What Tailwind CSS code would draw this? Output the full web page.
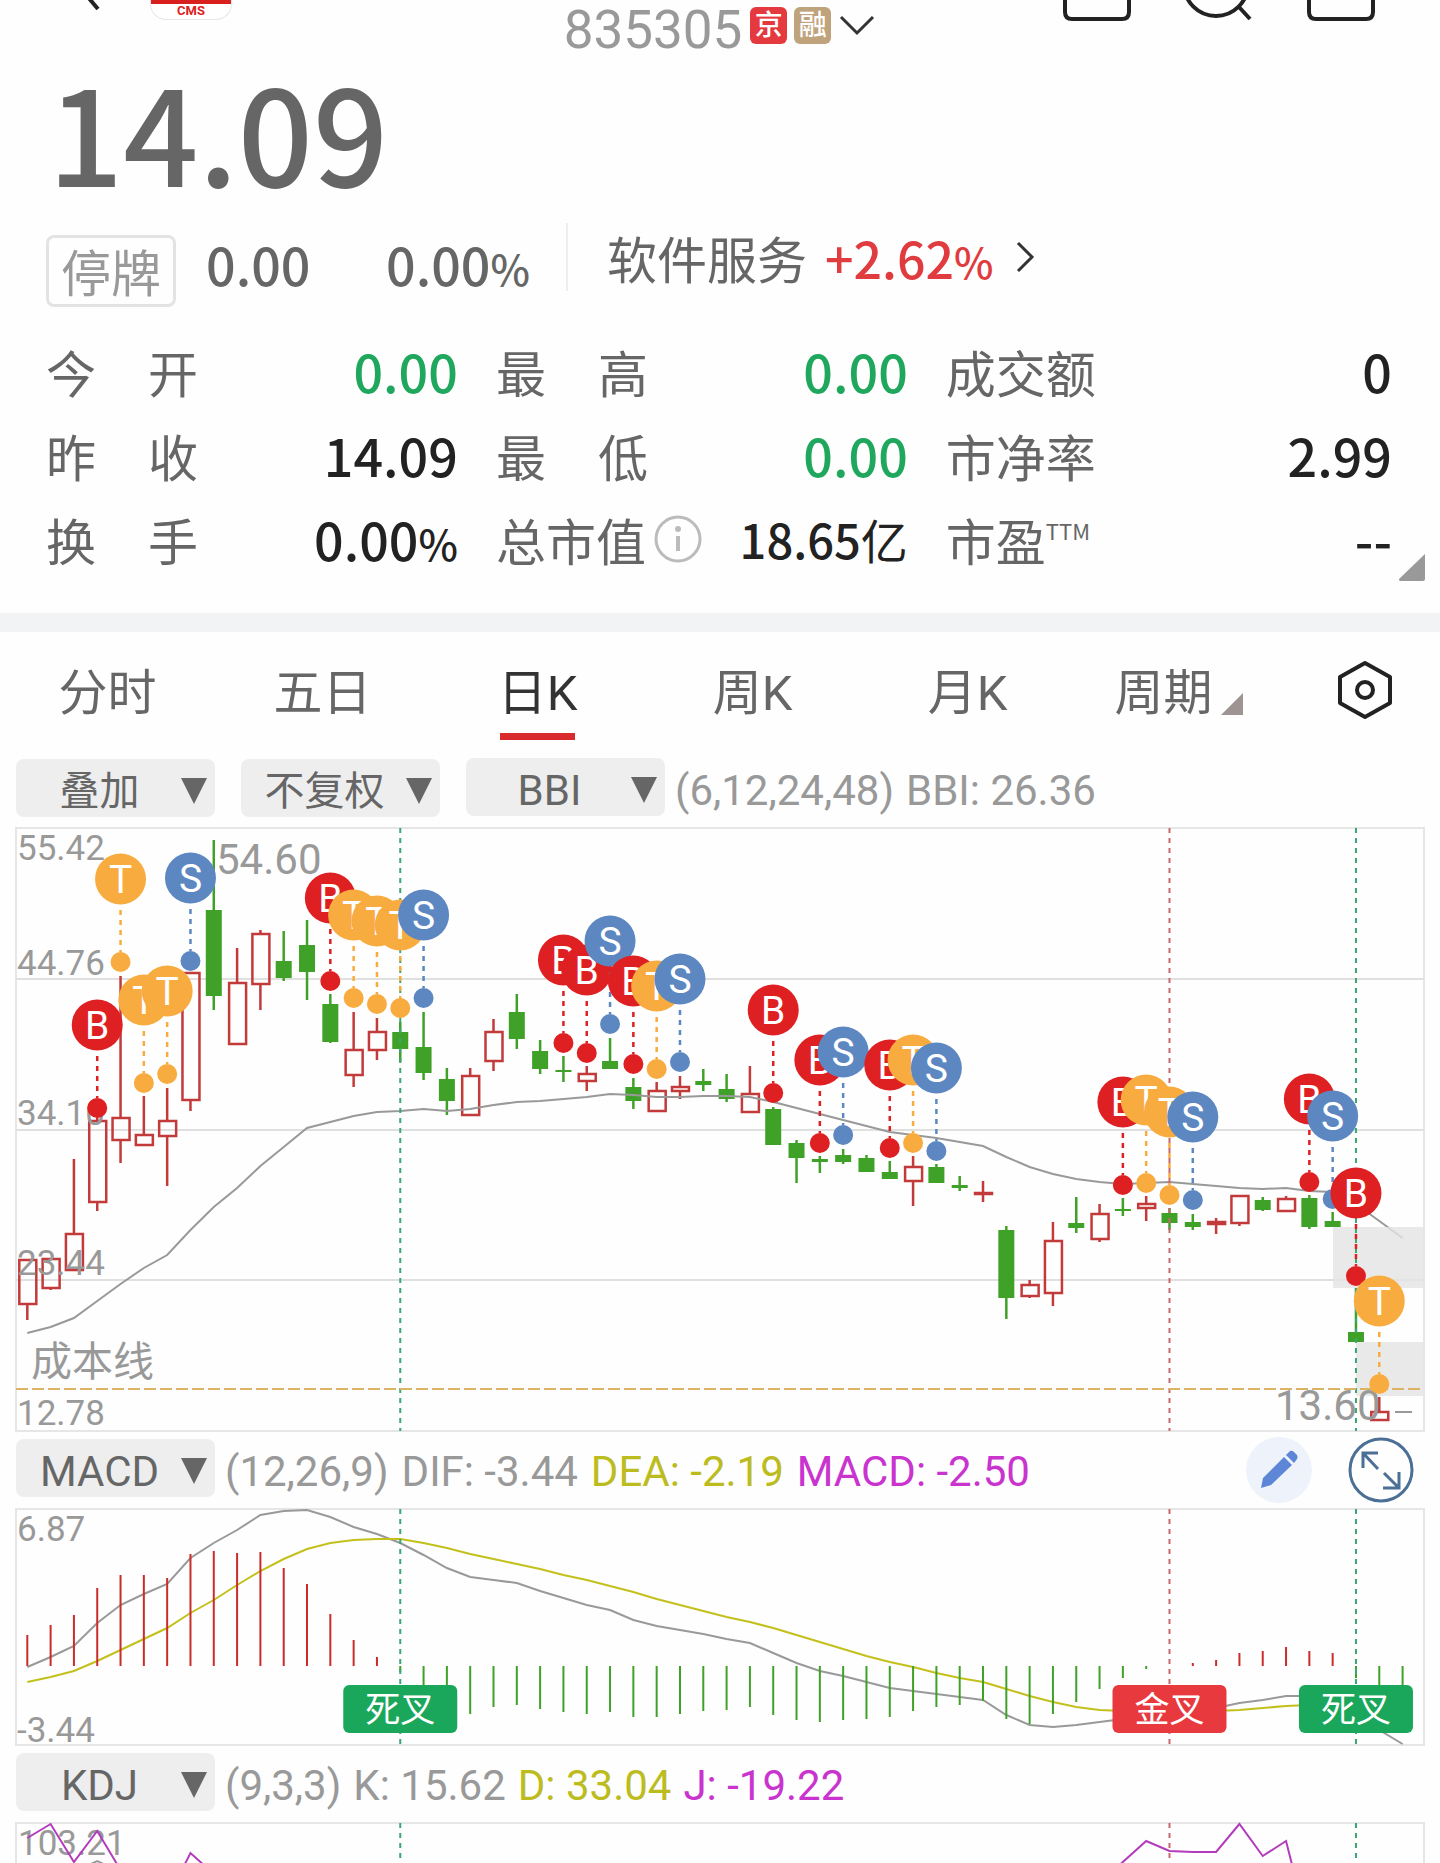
<!DOCTYPE html>
<html lang="zh-CN">
<head>
  <meta charset="UTF-8">
  <meta name="viewport" content="width=device-width, initial-scale=1.0">
  <title>835305 日K</title>
  <script src="https://cdn.jsdelivr.net/npm/@tailwindcss/browser@4"></script>
</head>
<body class="flex h-screen flex-col overflow-hidden bg-[#fefefe] font-['Roboto','Noto_Sans_CJK_SC',sans-serif] text-[#666]">

  <!-- Top bar, scrolled half out of view -->
  <header class="grid h-[58px] shrink-0 grid-cols-3">
    <div class="flex items-start">
      <button aria-label="返回" class="ml-[60px]">
        <svg class="h-5 w-[44px]" viewBox="0 0 44 20" fill="none" stroke="#222" stroke-width="4"><path d="M27 -4 L38 9"/></svg>
      </button>
      <div class="ml-[46px] flex h-5 w-[82px] flex-col overflow-hidden rounded-b-2xl border border-t-0 border-gray-200 bg-white text-center text-[13px] leading-[14px] font-bold text-[#d22]">
        <span class="h-1 shrink-0 bg-[#d8201f]"></span>
        CMS
      </div>
    </div>
    <div class="flex items-start justify-center">
      <h1 class="text-[53px] leading-[60px] text-[#999]">835305</h1>
      <span class="mt-[7px] ml-2 h-[37px] w-[37px] rounded-md bg-[#e4393e] text-center text-[28px] leading-[37px] font-medium text-white">京</span>
      <span class="mt-[7px] ml-[7px] h-[37px] w-[37px] rounded-md bg-[#bfa37c] text-center text-[28px] leading-[37px] font-medium text-white">融</span>
      <button aria-label="切换股票" class="mt-[14px] ml-[7px]">
        <svg class="h-6 w-[38px]" viewBox="0 0 38 24" fill="none" stroke="#333" stroke-width="3"><path d="M3 3 L19 19 L35 3"/></svg>
      </button>
    </div>
    <div class="flex items-start justify-end gap-[52px] pr-[64px]">
      <button aria-label="消息">
        <svg class="h-6 w-[70px]" viewBox="0 0 70 24" fill="none" stroke="#222" stroke-width="4"><path d="M3 -4 V12 Q3 19 10 19 H60 Q67 19 67 12 V-4"/></svg>
      </button>
      <button aria-label="搜索">
        <svg class="h-6 w-[70px]" viewBox="0 0 70 24" fill="none" stroke="#222" stroke-width="4"><circle cx="32" cy="-16" r="32"/><path d="M55 7 L66 19"/></svg>
      </button>
      <button aria-label="更多">
        <svg class="h-6 w-[70px]" viewBox="0 0 70 24" fill="none" stroke="#222" stroke-width="4"><path d="M3 -4 V12 Q3 19 10 19 H60 Q67 19 67 12 V-4"/></svg>
      </button>
    </div>
  </header>

  <!-- Quote -->
  <section class="relative shrink-0 pb-8 font-['Noto_Sans_CJK_SC',sans-serif]">
    <p class="pl-[48px] text-[132px] leading-[144px] font-medium">14.09</p>
    <div class="mt-[21px] flex items-start">
      <div class="mt-3 ml-[46px] flex w-[520px] items-start">
        <span class="h-[72px] w-[130px] rounded-lg border-3 border-[#e3e3e3] text-center text-[50px] leading-[64px] text-[#999]">停牌</span>
        <span class="ml-[30px] w-[180px] text-[52px] leading-[58px] font-medium">0.00</span>
        <span class="text-[52px] leading-[58px] font-medium">0.00<span class="text-[42px] leading-none">%</span></span>
      </div>
      <a href="#" class="flex items-center border-l-2 border-[#eee] pl-[39px] text-[50px] leading-[68px]">
        软件服务
        <span class="ml-[18px] font-medium text-[#e03c40]">+2.62<span class="text-[42px] leading-none">%</span></span>
        <svg class="ml-[22px] h-8 w-5" viewBox="0 0 20 32" fill="none" stroke="#333" stroke-width="3"><path d="M3 2 L17 16 L3 30"/></svg>
      </a>
    </div>

    <dl class="mt-[22px] grid grid-cols-[12fr_12fr_13fr] gap-x-[38px] pr-12 pl-[46px] text-[50px] leading-[84px] whitespace-nowrap">
      <div class="flex justify-between">
        <dt class="w-[152px] [text-align-last:justify]">今 开</dt>
        <dd class="text-[52px] font-medium text-[#1fa75d]">0.00</dd>
      </div>
      <div class="flex justify-between">
        <dt class="w-[152px] [text-align-last:justify]">最 高</dt>
        <dd class="text-[52px] font-medium text-[#1fa75d]">0.00</dd>
      </div>
      <div class="flex justify-between">
        <dt>成交额</dt>
        <dd class="text-[52px] font-medium text-[#222]">0</dd>
      </div>
      <div class="flex justify-between">
        <dt class="w-[152px] [text-align-last:justify]">昨 收</dt>
        <dd class="text-[52px] font-medium text-[#222]">14.09</dd>
      </div>
      <div class="flex justify-between">
        <dt class="w-[152px] [text-align-last:justify]">最 低</dt>
        <dd class="text-[52px] font-medium text-[#1fa75d]">0.00</dd>
      </div>
      <div class="flex justify-between">
        <dt>市净率</dt>
        <dd class="text-[52px] font-medium text-[#222]">2.99</dd>
      </div>
      <div class="flex justify-between">
        <dt class="w-[152px] [text-align-last:justify]">换 手</dt>
        <dd class="text-[52px] font-medium text-[#222]">0.00<span class="text-[42px] leading-none">%</span></dd>
      </div>
      <div class="flex justify-between">
        <dt class="flex items-center">总市值
          <button aria-label="总市值说明" class="ml-2">
            <svg class="h-12 w-12" viewBox="0 0 48 48" fill="none" stroke="#bbb" stroke-width="3"><circle cx="24" cy="24" r="22"/><path d="M24 21 V36" stroke-width="4"/><circle cx="24" cy="14" r="3" fill="#bbb" stroke="none"/></svg>
          </button>
        </dt>
        <dd class="text-[47px] text-[#222]"><span class="font-medium">18.65</span>亿</dd>
      </div>
      <div class="flex justify-between">
        <dt class="flex">市盈<span class="text-[22px] leading-[66px]">TTM</span></dt>
        <dd class="text-[52px] font-medium text-[#222]">--</dd>
      </div>
    </dl>
    <button aria-label="展开" class="absolute right-[15px] bottom-8">
      <svg class="h-[27px] w-[26px]" viewBox="0 0 26 27" fill="#999"><path d="M26 0 V25 Q26 27 24 27 H1 Q0 27 0 25 Z"/></svg>
    </button>
  </section>

  <div class="h-[19px] shrink-0 bg-[#f2f3f5]"></div>

  <!-- Period tabs -->
  <nav class="flex h-[128px] shrink-0 items-start text-[49px]">
    <div class="grid flex-1 grid-cols-6 pt-6 text-center leading-[76px]">
      <a href="#">分时</a>
      <a href="#">五日</a>
      <a href="#" aria-current="page" class="flex flex-col items-center text-[#333]">日K<span class="mt-px h-[7px] w-[75px] bg-[#d92b2e]"></span></a>
      <a href="#">周K</a>
      <a href="#">月K</a>
      <a href="#" class="flex justify-center gap-2 pr-2">周期
        <svg class="mt-[37px] h-[22px] w-[22px]" viewBox="0 0 22 22" fill="#9e9494"><path d="M22 0 V22 H0 Z"/></svg>
      </a>
    </div>
    <button aria-label="图表设置" class="flex w-[150px] justify-center pt-[28px]">
      <svg class="h-[60px] w-[56px]" viewBox="0 0 56 60" fill="none" stroke="#222" stroke-width="4" stroke-linejoin="round"><path d="M28 3 L53 17 V43 L28 57 L3 43 V17 Z"/><circle cx="28" cy="30" r="8"/></svg>
    </button>
  </nav>

  <main class="flex flex-col gap-[10px] px-4 text-[42px] leading-[58px]">
    <div class="flex h-[58px] shrink-0 items-center">
      <div class="relative mr-[26px]">
        <select aria-label="叠加" class="h-[58px] w-[199px] appearance-none rounded-lg bg-[#eee] pt-1 pr-8 text-center text-[40px]"><option>叠加</option></select>
        <svg class="pointer-events-none absolute top-[19px] right-2 h-[26px] w-[26px]" viewBox="0 0 26 26" fill="#666"><path d="M0 0 H26 L13 26 Z"/></svg>
      </div>
      <div class="relative mr-[26px]">
        <select aria-label="复权" class="h-[58px] w-[199px] appearance-none rounded-lg bg-[#eee] pt-1 pr-8 text-center text-[40px]"><option>不复权</option></select>
        <svg class="pointer-events-none absolute top-[19px] right-2 h-[26px] w-[26px]" viewBox="0 0 26 26" fill="#666"><path d="M0 0 H26 L13 26 Z"/></svg>
      </div>
      <div class="relative">
        <select aria-label="主图指标" class="h-[58px] w-[199px] appearance-none rounded-lg bg-[#eee] pt-1 pr-8 text-center text-[42px]"><option>BBI</option></select>
        <svg class="pointer-events-none absolute top-[19px] right-2 h-[26px] w-[26px]" viewBox="0 0 26 26" fill="#666"><path d="M0 0 H26 L13 26 Z"/></svg>
      </div>
      <p class="ml-[10px] flex gap-3 pt-1 text-[#999]">
        <span>(6,12,24,48)</span>
        <span>BBI: 26.36</span>
      </p>
    </div>

    <svg id="kline" class="h-auto w-full shrink-0 overflow-visible" viewBox="0 0 1408 603"></svg>

    <div class="flex h-[58px] shrink-0 items-center">
      <div class="relative">
        <select aria-label="副图指标一" class="h-[58px] w-[199px] appearance-none rounded-lg bg-[#eee] pt-1 pr-8 text-center text-[42px]"><option>MACD</option></select>
        <svg class="pointer-events-none absolute top-[19px] right-2 h-[26px] w-[26px]" viewBox="0 0 26 26" fill="#666"><path d="M0 0 H26 L13 26 Z"/></svg>
      </div>
      <p class="ml-[10px] flex gap-[13px] pt-1 text-[#999]">
        <span>(12,26,9)</span>
        <span>DIF: -3.44</span>
        <span class="text-[#bcbc1e]">DEA: -2.19</span>
        <span class="text-[#c934cf]">MACD: -2.50</span>
      </p>
      <div class="ml-auto flex gap-9 pr-[10px]">
        <button aria-label="画线">
          <svg class="h-[66px] w-[66px]" viewBox="0 0 66 66"><circle cx="33" cy="33" r="33" fill="#edf2fb"/><path fill="#5d87d6" d="M15 51 L17 41 L38 20 L46 28 L25 48 Z M40 18 L44 14 Q46 13 48 15 L51 18 Q52 20 51 22 L48 26 Z"/></svg>
        </button>
        <button aria-label="全屏">
          <svg class="h-[66px] w-[66px]" viewBox="0 0 66 66" fill="none" stroke="#4b6f95" stroke-width="3"><circle cx="33" cy="33" r="31"/><path d="M30 16 H15 V31 M15 16 L30 32 M36 36 L51 51 M35 51 H51 V35"/></svg>
        </button>
      </div>
    </div>

    <svg id="macd" class="h-auto w-full shrink-0 overflow-visible" viewBox="0 0 1408 236"></svg>

    <div class="flex h-[58px] shrink-0 items-center">
      <div class="relative">
        <select aria-label="副图指标二" class="h-[58px] w-[199px] appearance-none rounded-lg bg-[#eee] pt-1 pr-8 text-center text-[42px]"><option>KDJ</option></select>
        <svg class="pointer-events-none absolute top-[19px] right-2 h-[26px] w-[26px]" viewBox="0 0 26 26" fill="#666"><path d="M0 0 H26 L13 26 Z"/></svg>
      </div>
      <p class="ml-[10px] flex gap-3 pt-1 text-[#999]">
        <span>(9,3,3)</span>
        <span>K: 15.62</span>
        <span class="text-[#bcbc1e]">D: 33.04</span>
        <span class="text-[#c934cf]">J: -19.22</span>
      </p>
    </div>

    <svg id="kdj" class="h-auto w-full shrink-0 overflow-visible" viewBox="0 0 1408 236"></svg>
  </main>

  <script>
    const RED = '#c23a3a', GREEN = '#3fa127', GREY = '#999';
    const X = i => 11.3 + 23.31 * i;

    const line = (x1, y1, x2, y2, color, w, dash) =>
      `<line x1="${x1}" y1="${y1}" x2="${x2}" y2="${y2}" stroke="${color}" stroke-width="${w}"${dash ? ` stroke-dasharray="${dash}"` : ''}/>`;
    const poly = (ys, color, from = 0) =>
      `<polyline fill="none" stroke="${color}" stroke-width="2" points="${ys.map((y, i) => X(i + from) + ',' + y).join(' ')}"/>`;
    const label = (x, y, text, size = 35) =>
      `<text x="${x}" y="${y}" font-size="${size}" fill="${GREY}">${text}</text>`;
    const frame = h => `<rect x="0" y="0" width="1408" height="${h}" fill="none" stroke="#e6e6e6" stroke-width="2"/>`;

    // Golden cross / death cross markers run through all three charts
    const crosses = [[16, '#3aa673', '死叉'], [49, '#c9686c', '金叉'], [57, '#3aa673', '死叉']];
    const crossLines = h => crosses.map(([i, c]) => line(X(i), 0, X(i), h, c, 2, '5 5')).join('');

    // [up = 1, high, body top, body bottom, low]
    const candles = [
      [1,432,432,476,492], [1,431,431,460,462], [1,331,406,442,442], [1,289,293,374,383], [1,148,290,312,335],
      [1,268,307,317,317], [1,260,293,308,358], [1,145,145,272,283], [0,12,82,168,182], [1,120,155,216,216],
      [1,102,106,156,182], [0,103,133,150,153], [0,92,117,144,172], [0,166,176,214,215], [1,184,222,247,259],
      [1,190,204,222,232], [0,194,204,221,234], [0,184,219,245,252], [0,240,251,273,287], [1,240,248,287,287],
      [1,191,204,233,243], [0,166,184,211,221], [0,212,223,241,246], [0,228,242,244,254], [1,238,246,253,263],
      [0,210,233,241,241], [0,250,259,273,281], [1,254,263,283,283], [1,248,259,263,271], [0,241,253,257,263],
      [0,246,261,271,274], [1,238,266,284,284], [0,279,281,317,317], [0,312,315,330,355], [0,328,331,334,345],
      [0,321,327,334,336], [0,327,330,344,344], [0,333,344,351,351], [1,328,339,353,378], [0,336,339,355,355],
      [0,348,357,360,363], [1,353,365,366,374], [0,398,402,470,491], [1,452,457,468,470], [1,394,413,465,478],
      [0,369,395,400,405], [1,376,386,411,414], [0,370,381,383,388], [1,368,376,380,393], [0,380,385,395,402],
      [0,386,394,399,402], [1,390,394,396,406], [1,367,368,395,398], [0,369,372,382,383], [1,368,371,383,383],
      [0,367,370,399,401], [0,384,393,399,399], [0,460,504,514,514], [1,569,584,592,592]
    ];
    const bbi = [505,499,490,473,456,440,427,402,379,360,338,319,300,294,288,284,283,281,283,281,277,274,273,271,269,
      266,267,269,269,268,268,269,274,280,286,292,298,304,307,310,314,318,329,339,346,351,354,356,355,354,356,358,360,
      361,360,363,364,376,393,410];
    // [index, type, y of the dot]
    const trades = [
      [3,'B',280], [4,'T',134], [5,'T',255], [6,'T',246], [7,'S',133], [13,'B',153], [14,'T',170], [15,'T',176],
      [16,'T',180], [17,'S',170], [23,'B',215], [24,'B',225], [25,'S',196], [26,'B',236], [27,'T',241], [28,'S',234],
      [32,'B',265], [34,'B',315], [35,'S',307], [37,'B',320], [38,'T',315], [39,'S',323], [47,'B',357], [48,'T',355],
      [49,'T',367], [50,'S',372], [55,'B',354], [56,'S',371], [57,'B',448], [58,'T',556]
    ];
    const tradeColors = { B: '#df2023', T: '#f8ac3f', S: '#5d87c1' };

    function drawKline() {
      let s = frame(603);
      [151, 302, 452].forEach(y => s += line(0, y, 1408, y, '#e0e0e0', 2));
      candles.forEach(([up, high, top, bottom, low], i) => {
        const x = X(i);
        const color = up ? RED : GREEN;
        s += line(x, high, x, top, color, 2.5) + line(x, bottom, x, low, color, 2.5);
        s += up
          ? `<rect x="${x - 8}" y="${top}" width="17" height="${bottom - top}" fill="none" stroke="${RED}" stroke-width="2.5"/>`
          : `<rect x="${x - 8}" y="${top}" width="16" height="${bottom - top}" fill="${GREEN}"/>`;
      });
      s += poly(bbi, GREY);
      s += '<rect x="1317" y="399" width="90" height="61" fill="#e4e4e4" fill-opacity="0.8"/>';
      s += '<rect x="1340" y="514" width="67" height="54" fill="#e4e4e4" fill-opacity="0.8"/>';
      s += crossLines(603);
      s += line(0, 561, 1408, 561, '#dbb366', 2, '12 4');
      s += label(1, 32, '55.42') + label(1, 147, '44.76') + label(1, 297, '34.10') + label(1, 447, '23.44') + label(1, 597, '12.78');
      s += label(200, 46, '54.60', 42) + label(1259, 592, '13.60', 42) + label(15, 548, '成本线', 41);
      s += line(1379, 584, 1396, 584, GREY, 2);
      trades.forEach(([i, type, y]) => {
        const x = X(i), c = tradeColors[type];
        s += line(x, y - 52, x, y - 10, c, 2.5, '5 5');
        s += `<circle cx="${x}" cy="${y}" r="10" fill="${c}"/><circle cx="${x}" cy="${y - 83}" r="25.5" fill="${c}"/>`;
        s += `<text x="${x}" y="${y - 69}" font-size="39" fill="#fff" text-anchor="middle">${type}</text>`;
      });
      document.getElementById('kline').innerHTML = s;
    }

    const zero = 157;
    const bars = [126,116,106,79,66,66,69,45,42,44,43,59,75,105,131,148,163,190,198,205,198,196,200,203,205,203,208,208,
      205,202,201,198,206,211,213,211,210,208,202,198,196,192,210,215,205,193,180,169,160,157,154,151,144,142,138,142,
      144,169,190,200];
    const dif = [158,148,137,114,96,85,75,49,34,21,6,2,1,8,18,25,34,46,59,68,71,74,82,89,96,101,111,117,121,125,130,134,
      144,154,162,167,173,179,182,185,188,191,206,216,218,216,213,210,206,202,200,199,194,191,187,187,188,198,221,235];
    const dea = [173,168,162,152,141,130,119,104,91,76,62,50,40,34,31,30,30,34,39,45,50,55,60,66,71,77,83,90,96,102,108,
      113,119,126,133,140,147,153,158,164,169,173,180,187,193,198,201,202,203,203,203,202,201,199,197,196,195,195,198,201];

    function drawMacd() {
      let s = frame(236) + label(1, 32, '6.87') + label(1, 233, '-3.44');
      s += poly(dif, GREY) + poly(dea, '#c3c01c');
      bars.forEach((y, i) => s += line(X(i), zero, X(i), y, y < zero ? '#cc2b2b' : GREEN, 2));
      s += crossLines(236);
      crosses.forEach(([i, , text]) => {
        s += `<rect x="${X(i) - 57}" y="176" width="114" height="48" rx="6" fill="${text === '金叉' ? '#e8393f' : '#1ba75b'}"/>`;
        s += `<text x="${X(i)}" y="213" font-size="35" fill="#fff" text-anchor="middle">${text}</text>`;
      });
      document.getElementById('macd').innerHTML = s;
    }

    function drawKdj() {
      let s = frame(236) + label(2, 32, '103.21');
      s += poly([49, 38, 49], GREY, 2);
      s += poly([15, 1, 39, 8, 47, 90, 76, 30, 51], '#b23cbc');
      s += poly([60, 39, 18, 28, 29, 29, 1, 33, 18, 110], '#b23cbc', 46);
      document.getElementById('kdj').innerHTML = s + crossLines(236);
    }

    drawKline();
    drawMacd();
    drawKdj();
  </script>
</body>
</html>
